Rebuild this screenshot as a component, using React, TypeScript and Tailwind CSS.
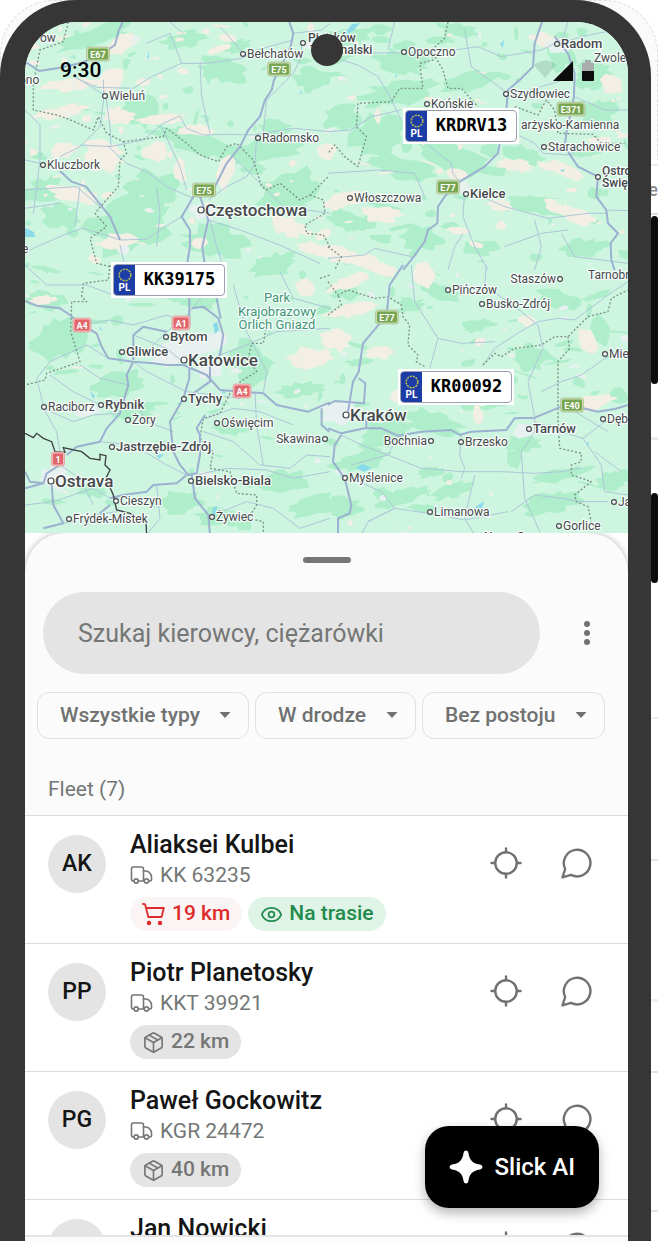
import { useState } from "react";
import { Eye, Package } from "lucide-react";

type Blob = [number, number, number, number];

type City = {
  name: string;
  x: number;
  y: number;
  size?: number;
  bold?: boolean;
  left?: boolean; // label on the left of the dot
};

type Driver = {
  name: string;
  initials: string;
  plate: string;
  distance: string;
  urgent?: boolean;
  onRoute?: boolean;
};

const drivers: Driver[] = [
  { name: "Aliaksei Kulbei", initials: "AK", plate: "KK 63235", distance: "19 km", urgent: true, onRoute: true },
  { name: "Piotr Planetosky", initials: "PP", plate: "KKT 39921", distance: "22 km" },
  { name: "Paweł Gockowitz", initials: "PG", plate: "KGR 24472", distance: "40 km" },
  { name: "Jan Nowicki", initials: "JN", plate: "KR 51820", distance: "52 km" },
];

const cities: City[] = [
  { name: "Wieluń", x: 105, y: 96 },
  { name: "Kluczbork", x: 43, y: 165 },
  { name: "Bełchatów", x: 243, y: 54 },
  { name: "Radomsko", x: 258, y: 138 },
  { name: "Częstochowa", x: 201, y: 210, size: 17, bold: true },
  { name: "Opoczno", x: 404, y: 52 },
  { name: "Końskie", x: 427, y: 104 },
  { name: "Szydłowiec", x: 506, y: 94 },
  { name: "Radom", x: 557, y: 44, size: 13, bold: true },
  { name: "Starachowice", x: 544, y: 147 },
  { name: "Włoszczowa", x: 350, y: 198 },
  { name: "Kielce", x: 466, y: 194, size: 13, bold: true },
  { name: "Bytom", x: 166, y: 337, size: 13, bold: true },
  { name: "Gliwice", x: 122, y: 352, size: 13, bold: true },
  { name: "Katowice", x: 184, y: 360, size: 17, bold: true },
  { name: "Tychy", x: 184, y: 399, size: 13, bold: true },
  { name: "Rybnik", x: 101, y: 405, size: 13, bold: true },
  { name: "Raciborz", x: 44, y: 407 },
  { name: "Żory", x: 128, y: 420 },
  { name: "Oświęcim", x: 217, y: 423 },
  { name: "Skawina", x: 325, y: 439, left: true },
  { name: "Jastrzębie-Zdrój", x: 112, y: 447, size: 13, bold: true },
  { name: "Bielsko-Biala", x: 191, y: 481, size: 13, bold: true },
  { name: "Ostrava", x: 51, y: 481, size: 17, bold: true },
  { name: "Cieszyn", x: 116, y: 501 },
  { name: "Frýdek-Místek", x: 69, y: 519 },
  { name: "Żywiec", x: 212, y: 517 },
  { name: "Pińczów", x: 448, y: 290 },
  { name: "Busko-Zdrój", x: 482, y: 304 },
  { name: "Staszów", x: 560, y: 279, left: true },
  { name: "Mie", x: 605, y: 354 },
  { name: "Kraków", x: 346, y: 415, size: 17, bold: true },
  { name: "Bochnia", x: 431, y: 441, left: true },
  { name: "Brzesko", x: 461, y: 442 },
  { name: "Tarnów", x: 529, y: 429, size: 13, bold: true },
  { name: "Dęb", x: 603, y: 419 },
  { name: "Myślenice", x: 345, y: 478 },
  { name: "Limanowa", x: 430, y: 512 },
  { name: "Ja", x: 614, y: 502 },
  { name: "Gorlice", x: 559, y: 526 },
];

const shields = [
  { code: "E67", x: 98, y: 54 },
  { code: "E75", x: 279, y: 69 },
  { code: "E75", x: 204, y: 190 },
  { code: "E77", x: 448, y: 187 },
  { code: "E371", x: 571, y: 109 },
  { code: "E77", x: 387, y: 317 },
  { code: "E40", x: 572, y: 405 },
  { code: "A4", x: 82, y: 325 },
  { code: "A1", x: 181, y: 323 },
  { code: "A4", x: 242, y: 391 },
  { code: "1", x: 58, y: 459 },
];

const forests: Blob[] = [
  [95, 36, 40, 9], [185, 40, 22, 8], [222, 70, 22, 12], [140, 112, 20, 15], [200, 143, 48, 10], [262, 152, 38, 12],
  [150, 192, 28, 20], [45, 190, 17, 12], [128, 226, 38, 26], [62, 216, 20, 12], [215, 240, 30, 14], [290, 192, 30, 20],
  [312, 80, 17, 12], [275, 128, 16, 8], [236, 46, 14, 6], [350, 36, 22, 10], [402, 62, 26, 11], [400, 92, 36, 12],
  [342, 118, 18, 13], [378, 136, 27, 20], [450, 156, 40, 15], [522, 155, 22, 9], [470, 82, 26, 9], [592, 74, 18, 14],
  [560, 52, 14, 18], [600, 112, 18, 12], [402, 168, 30, 11], [540, 206, 30, 9], [420, 238, 20, 13], [352, 222, 22, 9],
  [480, 248, 18, 8], [584, 248, 24, 9], [60, 338, 27, 22], [45, 300, 20, 9], [200, 300, 18, 9], [172, 290, 12, 11],
  [250, 362, 18, 20], [120, 384, 24, 12], [132, 411, 24, 8], [232, 428, 20, 8], [180, 502, 24, 11], [222, 518, 28, 9],
  [280, 482, 28, 11], [312, 506, 26, 9], [92, 490, 15, 7], [345, 292, 16, 8], [440, 292, 20, 8], [410, 305, 14, 6],
  [560, 300, 22, 8], [530, 358, 18, 12], [600, 330, 12, 15], [388, 432, 28, 13], [432, 422, 30, 11], [482, 402, 24, 8],
  [560, 475, 28, 6], [362, 460, 28, 9], [402, 497, 24, 9], [452, 490, 20, 7], [550, 503, 28, 10], [610, 482, 14, 9],
  [345, 508, 18, 11], [520, 444, 20, 8], [275, 265, 22, 11], [300, 390, 24, 7], [478, 325, 18, 6], [460, 30, 22, 6],
];

const fields: Blob[] = [
  [122, 44, 15, 9], [72, 85, 30, 6], [112, 80, 12, 14], [60, 112, 26, 6], [102, 154, 20, 15], [120, 116, 16, 8],
  [64, 150, 13, 7], [76, 195, 26, 7], [162, 120, 22, 5], [155, 152, 11, 10], [196, 130, 18, 6], [225, 172, 9, 16],
  [180, 172, 6, 12], [118, 242, 18, 8], [288, 226, 17, 10], [316, 250, 20, 7], [328, 150, 9, 9], [345, 200, 20, 7],
  [380, 214, 20, 8], [345, 256, 28, 8], [370, 264, 26, 7], [515, 165, 18, 6], [562, 170, 22, 6], [574, 215, 24, 7],
  [500, 205, 14, 6], [545, 40, 14, 7], [612, 84, 12, 9], [598, 141, 12, 5], [310, 358, 20, 10], [306, 288, 10, 12],
  [42, 300, 13, 4], [350, 282, 24, 6], [336, 340, 14, 10], [350, 310, 24, 6], [380, 352, 13, 7], [425, 276, 12, 13],
  [588, 340, 8, 14], [526, 320, 10, 6], [478, 415, 5, 12], [594, 402, 20, 7], [400, 394, 11, 7], [228, 38, 9, 4],
];

const towns: Blob[] = [
  [185, 350, 36, 13], [340, 412, 20, 11], [55, 478, 15, 12], [203, 211, 13, 8], [462, 188, 10, 6], [558, 46, 12, 8],
  [526, 431, 12, 7], [88, 410, 12, 6], [124, 250, 7, 5], [310, 45, 8, 5], [205, 478, 9, 7], [210, 372, 14, 6],
];

// one road set for each quarter of the map, drawn in that quarter's own 990x810 units
const tiles = [
  {
    place: "translate(0 0) scale(0.3333)",
    major:
      "M75 185L118 213L180 203L240 190L300 165L345 135L355 95L368 66M868 66L880 100L872 140L850 185L822 240L815 270L795 300L780 350L745 390L720 440L680 490L645 560L580 590L545 650L570 690L570 740L560 800M600 590L625 660L607 740L615 800M180 513L215 545L258 560L290 600L330 650L360 720",
    minor:
      "M880 100L965 90L990 70M230 235L290 262L400 265L455 230L545 190L620 190L725 175L770 150L880 120M225 230L320 290M310 240L312 290L300 380L240 440L180 470M318 290L330 380L333 440M240 435L330 440L430 420L490 370L540 348L560 385L610 405L680 403L760 405L880 385L990 395M320 435L380 490L440 515L500 560L580 595M75 330L120 375L120 480L110 560L100 640M75 480L130 492M75 625L180 610M75 760L100 745L180 710L245 685L300 700L360 720L440 718L480 690L545 650M360 735L375 800M770 410L765 490L740 530L680 560L625 600M905 130L905 170L880 220L800 300L790 400M600 185L605 290L630 400M625 660L720 690L800 720L850 740L960 790M630 660L650 740L670 800M485 380L540 500L560 570M440 130L510 100L545 190M510 66L550 100M660 80L740 170M75 570L230 560L300 620M240 560L225 680M470 560L480 640L470 740M700 470L770 540L850 620L990 640",
    dotted:
      "M205 66L190 125L120 150L100 250L100 330L170 345L200 355L280 390L295 350L320 400L370 425L380 460L360 480L355 560L310 610L285 640L320 680L270 715L290 790L330 800M370 425L490 410L500 385L560 430L600 465L655 485L680 440L710 430L760 480L785 560L800 570L840 550L900 600L930 585L985 530M930 585L970 600L975 640L915 675L920 700L970 705L990 740",
  },
  {
    place: "translate(328 0) scale(0.3333)",
    major:
      "M642 66L620 130L615 200L575 240L540 270L535 330L520 400L510 460L470 500L395 545L350 590L330 620L328 670L300 690L290 725L250 780L225 810M680 110L720 160L740 220L738 290L715 400L710 440L750 500L810 530L805 590L835 630L840 670L870 700L848 730L850 780L860 810",
    minor:
      "M40 160L220 158M40 180L90 195L150 230L180 280L220 360M380 150L450 140L520 170L640 150L680 130M410 90L430 200L540 280M0 395L70 390L130 350L220 330M300 435L370 490L375 520L395 545M410 575L405 650L440 740L480 810M440 580L530 620L660 655L780 640L835 640M560 400L620 430L645 460L725 465L780 430M0 520L150 510L260 520L290 590M0 775L110 765L140 745L250 770M405 700L380 740L360 810M830 630L900 632M720 66L700 130L760 110L860 90M740 290L830 330L900 330M545 290L640 260L740 230M200 66L180 150M620 660L640 740L620 810M700 700L740 770L900 790M530 740L640 700L720 690",
    dotted:
      "M360 66L350 115L310 150L315 180L275 190L285 265L215 265L190 305L90 310L85 380L115 410L90 500L50 470L20 435L0 460M310 150L345 210L360 265L400 265L450 320M560 320L630 345L655 300L680 330L690 400L795 403L820 430L890 430M0 740L40 770L20 810",
  },
  {
    place: "translate(0 265) scale(0.3333)",
    major:
      "M75 108L110 122L180 130L210 150L245 180L290 205L305 245L325 280L400 290L460 295L500 300L550 300L620 330L660 375L727 380L790 385L830 420L900 435L925 440L990 412M400 290L380 330L385 360L360 445L320 490L300 530L230 545L200 570M560 0L568 100L568 180M610 0L650 100L662 160M575 130L610 125L655 160L670 210L660 270L632 300M400 285L400 210L430 185L500 200M568 310L568 340L550 400L510 470L520 560L540 600L565 630L590 625L600 570L600 510L590 490L615 450M630 300L630 350L580 385M75 620L90 650L130 655L75 670M130 655L140 625L180 600M155 660L160 720L190 775L130 790M330 700L370 690L440 680L460 660L530 655L560 630M300 745L330 720M575 630L585 700L625 750L630 810M965 430L965 480L988 500",
    minor:
      "M75 0L140 60L260 60L340 90M245 180L330 165L400 180L500 150L568 180M130 420L110 340L150 290L260 240L325 280M130 430L170 500L180 560M300 420L220 380L150 330M385 360L300 340L240 300M400 290L440 320L500 350L560 380L640 390L720 400M440 260L500 200L560 150L620 80M400 210L500 250L560 300M660 270L740 240L830 200L990 190M700 60L740 200L800 320L790 385M620 460L700 430L780 440L880 480M610 500L700 530L780 600L870 610L920 570L990 575M590 630L680 610L800 615L880 640L990 620M300 530L400 540L500 600L560 630M75 720L160 710L280 670L330 700M180 600L240 640L280 720M190 775L280 750L350 740M640 750L740 710L820 730L900 790L990 760M840 20L880 100L990 130M400 400L440 470L520 500M360 445L280 450L220 470L130 430M765 380L770 480L790 600M470 660L480 760L440 810",
    dotted:
      "M330 0L325 45L250 55L245 95L260 110L215 110L212 200L240 290L140 325L135 345L75 360M800 180L790 235L755 235L745 280L770 320L720 350L725 370M690 385L660 445L610 460L600 520L640 560L630 610L690 620L710 685L770 690L770 720L745 760L790 770L790 810M960 40L990 30",
  },
  {
    place: "translate(328 265) scale(0.3333)",
    major:
      "M225 0L185 60L178 130L160 170L105 235L92 320L75 350L60 440M92 340L112 355L108 415L20 408L0 420M0 490L40 505L110 490L160 490L210 512L280 500L370 495L395 510L430 500L535 495L560 460L620 458L700 425L765 430L810 440L860 432L900 420M115 460L115 490M40 510L20 540L15 590L50 640L70 720L65 745L30 760L30 810",
    minor:
      "M465 300L500 250L560 210L630 170L690 160L740 165L840 90L900 50M475 0L470 60L580 140L630 180L645 250L600 350L620 455M250 0L260 110L330 220L400 235L500 230M330 220L300 330M400 510L395 570L410 610L400 640M210 512L180 570L100 540L40 510M70 600L180 570L280 610L400 620L520 620L620 625L700 620L760 610M440 630L410 760L440 810M120 770L200 730L300 745L410 765L540 740M620 458L620 500L580 560L590 700L640 810M765 520L820 600L830 680L900 690M765 520L830 470L900 455M765 520L700 500L620 470M70 640L160 680L200 730L120 770L100 810M800 560L880 620M640 380L700 350L760 330L860 260M725 430L840 500M550 740L620 690L700 700L760 710L840 710",
    dotted:
      "M0 50L30 90L60 75L140 100L180 95L220 120L225 155L245 180L240 240L270 270L265 290L290 305M0 150L40 120L30 90M465 300L500 265L520 275L560 250L640 240L680 215L720 215L780 155L840 140L850 100L900 75M720 215L725 250L690 290L690 420L690 460L695 550L760 565L760 590L730 600L730 630L790 650L740 690L745 710L780 725L790 770",
  },
];

const stateBorder =
  "M75 505L100 518L110 505L130 520L155 530L165 560L195 562L190 548L245 560L270 580L300 585L300 568L318 572L315 600L330 615L318 640L340 690L350 735L390 745L410 760L438 770L440 810";

const lakes =
  "M25 228l9 4l1 5l-10 0zM343 36l9-12l8-1l-7 8zM500 44l4-4l-1 8zM213 324l4-2l2 8l-4 4zM90 391l5 5l-2 3zM156 455l8-1l-5 5zM356 468l6-4l10 4l-8 4zM473 509l11-8l-2 7l-6 4zM213 508l4-2l-1 8l-4 1zM222 389l3 1l0 4l-3-1zM547 423l4 2l-3 0zM300 90l3 5l-3-2zM217 250l4 4l-1 3zM560 170l5-1l-2 3zM147 60l2-10l0 8zM395 76l3-2l-2 4zM586 443l3-1l-1 4zM176 150l6 2l-5-1zM99 326l4 5l-3-1z";

const random = (seed: number) => {
  let s = seed;
  return () => {
    s = (s * 16807) % 2147483647;
    return s / 2147483647;
  };
};

// ragged outline round an ellipse
const blobPath = ([cx, cy, rx, ry]: Blob, rnd: () => number) => {
  const steps = rx > 12 ? 22 : 9;
  const tilt = (rnd() - 0.5) * 0.7;
  let d = "";
  for (let i = 0; i < steps; i++) {
    const a = (i / steps) * Math.PI * 2;
    const r = 0.7 + rnd() * 0.6;
    const px = Math.cos(a) * rx * r;
    const py = Math.sin(a) * ry * r;
    const x = cx + px * Math.cos(tilt) - py * Math.sin(tilt);
    const y = cy + px * Math.sin(tilt) + py * Math.cos(tilt);
    d += `${i ? "L" : "M"}${x.toFixed(1)} ${y.toFixed(1)}`;
  }
  return d + "Z";
};

const scatter = (count: number, seed: number, maxY: number, max: number): Blob[] => {
  const rnd = random(seed);
  return Array.from({ length: count }, () => [
    25 + rnd() * 603,
    22 + rnd() * maxY,
    2 + rnd() * rnd() * max,
    1 + rnd() * rnd() * max * 0.6,
  ]);
};

const toPath = (blobs: Blob[], seed: number) => {
  const rnd = random(seed);
  return blobs.map((b) => blobPath(b, rnd)).join("");
};

const forestPath = toPath([...forests, ...scatter(190, 71, 511, 17)], 11);
const fieldPath = toPath([...fields, ...scatter(75, 913, 250, 12), ...scatter(15, 55, 511, 7)], 23);
const townPath = toPath([...towns, ...scatter(60, 407, 511, 5)], 37);

const Shield = ({ code, x, y }: { code: string; x: number; y: number }) => {
  const red = !code.startsWith("E");
  const w = code.length * 5 + 6;
  return (
    <g>
      <rect x={x - w / 2 - 1} y={y - 7} width={w + 2} height={14} rx={2.5} fill={red ? "#f4b8ba" : "#c9dcae"} stroke={red ? "#e58f92" : "#9fb58a"} strokeWidth={0.6} />
      <rect x={x - w / 2 + 0.5} y={y - 5.5} width={w - 1} height={11} rx={1.5} fill={red ? "#e0666b" : "#77a653"} />
      <text x={x} y={y + 3.5} fontSize={9} fontWeight={700} fill="#fff" textAnchor="middle">
        {code}
      </text>
    </g>
  );
};

const MapView = () => {
  return (
    <svg viewBox="25 22 603 511" preserveAspectRatio="xMidYMid slice" className="block h-full w-full" role="img" aria-label="Mapa">
      <rect x={-800} y={0} width={2400} height={560} fill="#cdf5e0" />
      <path d={forestPath} fill="#aeeecb" />
      <path d={fieldPath} fill="#f4efe4" />
      <path d={townPath} fill="#e9f1f0" />
      <path d={lakes} fill="#8adbea" />
      {tiles.map((t) => (
        <g key={t.place} transform={t.place} fill="none" strokeLinejoin="round">
          <path d={t.minor} stroke="#aec6d8" strokeWidth={3} />
          <path d={t.dotted} stroke="#7c9388" strokeWidth={4} strokeDasharray="6 6" />
          <path d={t.major} stroke="#9cb0d0" strokeWidth={6} />
        </g>
      ))}
      <path d={stateBorder} transform="translate(0 265) scale(0.3333)" fill="none" stroke="#3c4043" strokeWidth={4} />

      <g stroke="#ffffff" strokeOpacity={0.85} strokeWidth={2.5} paintOrder="stroke" strokeLinejoin="round" fill="#46494c" fontSize={12}>
        {cities.map((c) => (
          <text
            key={c.name}
            x={c.left ? c.x - 4 : c.x + 4}
            y={c.y + (c.size === 17 ? 6 : 4)}
            fontSize={c.size ?? 12}
            fontWeight={c.bold ? 500 : 400}
            textAnchor={c.left ? "end" : "start"}
          >
            {c.name}
          </text>
        ))}
        <text x={40} y={42}>ow</text>
        <text x={19} y={84}>ono</text>
        <text x={22} y={253}>e</text>
        <text x={521} y={129}>arżysko-Kamienna</text>
        <text x={594} y={62}>Zwole</text>
        <text x={588} y={279}>Tarnobr</text>
        <g fontSize={12} fontWeight={500}>
          <text x={308} y={42}>Piotrków</text>
          <text x={310} y={54}>Trybunalski</text>
          <text x={602} y={175}>Ostro</text>
          <text x={602} y={187}>Święt</text>
          <text x={484} y={541}>Nowy Sącz</text>
        </g>
        <g fill="#3f9677" textAnchor="middle" fontSize={13}>
          <text x={277} y={302}>Park</text>
          <text x={277} y={316}>Krajobrazowy</text>
          <text x={277} y={329}>Orlich Gniazd</text>
        </g>
      </g>
      <g fill="#fff" stroke="#46494c" strokeWidth={1.2}>
        {cities.map((c) => (
          <circle key={c.name} cx={c.x} cy={c.y} r={c.size === 17 ? 3 : 2.4} />
        ))}
        <circle cx={303} cy={43} r={2.4} />
        <circle cx={598} cy={177} r={2.4} />
      </g>
      {shields.map((s) => (
        <Shield key={`${s.x}-${s.y}`} {...s} />
      ))}
    </svg>
  );
};

const PlateMarker = ({ plate, className }: { plate: string; className: string }) => {
  return (
    <div className={`absolute bg-white p-0.5 ${className}`}>
      <div className="flex h-8 w-28 overflow-hidden rounded border border-gray-400 bg-white">
        <div className="flex w-[21px] flex-col items-center justify-center bg-[#1d3da6]">
          <svg viewBox="0 0 16 16" className="size-4" fill="none">
            <circle cx="8" cy="8" r="5.800" stroke="#aeb65a" strokeWidth="1.500" strokeDasharray="2.200 0.840" />
          </svg>
          <span className="text-[10px] leading-[10px] font-bold text-white">PL</span>
        </div>
        <span className="flex-1 text-center font-['DejaVu_Sans_Mono',monospace] text-[17px] leading-7 font-bold text-black">
          {plate}
        </span>
      </div>
    </div>
  );
};

const TruckIcon = () => (
  <svg viewBox="0 0 24 20" className="h-5 w-6" fill="none" stroke="currentColor" strokeWidth="1.600" strokeLinejoin="round" strokeLinecap="round">
    <path d="M4 16H3a1.500 1.500 0 0 1-1.500-1.500V3.500A1.500 1.500 0 0 1 3 2h8.500a2 2 0 0 1 2 2v12H8.500" />
    <path d="M13.500 6H16c3 0 5.500 3.500 5.500 6v2.500a1.500 1.500 0 0 1-1.500 1.500h-1" />
    <circle cx="6.200" cy="16" r="2.100" />
    <circle cx="16.500" cy="16" r="2.100" />
  </svg>
);

const CartIcon = () => (
  <svg viewBox="0 0 24 24" className="size-6" fill="none" stroke="currentColor" strokeWidth="1.800" strokeLinecap="round" strokeLinejoin="round">
    <path d="M1 2h1q1 0 1.300 1.200L6.300 15h12.400q1 0 1.200-1L21.800 6H4.200" />
    <circle cx="7" cy="21" r="1.300" fill="currentColor" />
    <circle cx="18" cy="21" r="1.300" fill="currentColor" />
  </svg>
);

const LocateIcon = () => (
  <svg viewBox="0 0 32 32" className="size-8" fill="none" stroke="currentColor" strokeWidth="2.400" strokeLinecap="round">
    <circle cx="16" cy="16" r="10.800" />
    <path d="M16 1.500v3.500M16 27v3.500M1.500 16h3.500M27 16h3.500" />
  </svg>
);

const ChatIcon = () => (
  <svg viewBox="0 0 32 32" className="size-8" fill="none" stroke="currentColor" strokeWidth="2.400" strokeLinejoin="round">
    <path d="M2.500 30.300L5.200 22A13.300 13.300 0 1 1 11 27.900z" />
  </svg>
);

const Filter = ({ label, value }: { label: string; value: string }) => {
  return (
    <label className="relative text-[#6f7271]">
      <span className="sr-only">{label}</span>
      <select className="h-[47px] appearance-none rounded-xl border border-[#dfe2e1] bg-transparent pr-12 pl-[22px] text-[21px] font-medium">
        <option>{value}</option>
      </select>
      <svg viewBox="0 0 12 6" className="pointer-events-none absolute top-5 right-[18px] h-1.5 w-3" fill="currentColor">
        <path d="M0.500 0h11L6 6z" />
      </svg>
    </label>
  );
};

const DriverRow = ({ driver }: { driver: Driver }) => {
  return (
    <li className="flex items-start gap-6 border-t border-[#dcdcdc] pt-[13px] pr-9 pb-3 pl-[23px]">
      <div className="mt-1.5 flex size-[58px] shrink-0 items-center justify-center rounded-full bg-[#e4e4e4] text-[23px] font-medium text-[#141515]">
        {driver.initials}
      </div>
      <div className="flex-1">
        <h3 className="text-[25px] leading-8 font-medium whitespace-nowrap text-[#141515]">{driver.name}</h3>
        <p className="flex items-center gap-1.5 text-[21px] leading-7 text-[#747776]">
          <TruckIcon />
          {driver.plate}
        </p>
        <div className="mt-2 flex gap-1.5">
          <span
            className={`flex h-[34px] items-center gap-1.5 rounded-full px-3 text-[21px] font-medium ${
              driver.urgent ? "bg-[#faf4f4] text-[#de2a2a]" : "bg-[#e4e4e4] text-[#747776]"
            }`}
          >
            {driver.urgent ? <CartIcon /> : <Package className="size-[23px]" strokeWidth={1.7} />}
            {driver.distance}
          </span>
          {driver.onRoute && (
            <span className="flex h-[34px] items-center gap-1.5 rounded-full bg-[#dff4e6] px-3 text-[21px] font-medium text-[#218a4c]">
              <Eye className="size-[23px]" strokeWidth={1.8} />
              Na trasie
            </span>
          )}
        </div>
      </div>
      <div className="mt-[18px] flex gap-[38px] text-[#6f7271]">
        <button type="button" aria-label="Lokalizuj">
          <LocateIcon />
        </button>
        <button type="button" aria-label="Wiadomość">
          <ChatIcon />
        </button>
      </div>
    </li>
  );
};

const App = () => {
  const [query, setQuery] = useState("");

  return (
    <div className="relative h-screen overflow-hidden bg-white font-[Roboto,sans-serif]">
      {/* Fondo claro detras de la esquina */}
      <div className="absolute inset-x-0 top-0 h-40 rounded-t-[54px] border border-b-0 border-dashed border-[#dddddd] bg-[#fafafa]" />

      <div className="relative flex h-full">
        <div className="flex min-w-0 flex-1 flex-col rounded-t-[76px] bg-[#363636] pt-[22px] pr-[23px] pl-[25px]">
          <div className="flex min-h-0 flex-1 flex-col overflow-hidden rounded-t-[52px] bg-white">
            {/* Mapa */}
            <div className="relative h-[511px] shrink-0 overflow-hidden">
              <MapView />
              <PlateMarker plate="KRDRV13" className="top-[86px] left-[378px]" />
              <PlateMarker plate="KK39175" className="top-[240px] left-[86px]" />
              <PlateMarker plate="KR00092" className="top-[347px] left-[373px]" />
              <div className="absolute inset-x-0 top-8 flex items-center justify-between pr-[34px] pl-[35px]">
                <span className="text-[21px] leading-8 font-medium text-black">9:30</span>
                <svg viewBox="0 0 60 24" className="h-6 w-[60px]" aria-hidden="true">
                  <path d="M0 7Q11 -2 22 7L11 20z" fill="#1d4f3a" opacity="0.15" />
                  <path d="M19 23L39 3V23z" fill="#0c0c0c" />
                  <path d="M48 5h3V2h6v3h3v9H48z" fill="#a9adac" />
                  <path d="M48 13h12v9q0 1-1 1H49q-1 0-1-1z" fill="#0c0c0c" />
                </svg>
              </div>
              <div className="absolute top-3 left-1/2 size-8 -translate-x-1/2 rounded-full bg-[#363636]" />
            </div>

            {/* Panel inferior */}
            <div className="flex min-h-0 flex-1 flex-col rounded-t-[40px] bg-[#fbfbfb] shadow-[0_0_6px_rgba(0,0,0,0.3)]">
              <div className="mt-6 h-1.5 w-12 shrink-0 self-center rounded-full bg-[#747776]" />

              <div className="mt-[29px] flex items-center gap-[23px] pr-[17px] pl-[18px]">
                <input
                  type="text"
                  aria-label="Szukaj"
                  placeholder="Szukaj kierowcy, ciężarówki"
                  value={query}
                  onChange={(e) => setQuery(e.target.value)}
                  className="h-[82px] min-w-0 flex-1 rounded-full bg-[#e4e4e4] px-[35px] text-[25px] text-[#141515] placeholder:text-[#747776] focus:outline-none"
                />
                <button type="button" aria-label="Más" className="flex size-12 items-center justify-center text-[#6f7271]">
                  <svg viewBox="0 0 6 24" className="h-6 w-1.5" fill="currentColor">
                    <circle cx="3" cy="3" r="3" />
                    <circle cx="3" cy="12" r="3" />
                    <circle cx="3" cy="21" r="3" />
                  </svg>
                </button>
              </div>

              <div className="mt-[18px] flex gap-1.5 pl-3">
                <Filter label="Typ" value="Wszystkie typy" />
                <Filter label="Status" value="W drodze" />
                <Filter label="Postój" value="Bez postoju" />
              </div>

              <h2 className="pt-9 pb-3 pl-[23px] text-[21px] leading-7 text-[#747776]">Fleet (7)</h2>

              <div className="relative min-h-0 flex-1">
                <ul className="h-full overflow-hidden bg-white">
                  {drivers.map((d) => (
                    <DriverRow key={d.plate} driver={d} />
                  ))}
                </ul>
                <button
                  type="button"
                  className="absolute right-[29px] bottom-[27px] flex h-[82px] items-center gap-3 rounded-3xl bg-black px-6 text-2xl font-medium text-white shadow-[0_5px_12px_rgba(0,0,0,0.3)]"
                >
                  <svg viewBox="0 0 34 34" className="size-[34px]" fill="currentColor">
                    <path d="M17 0.500q2 0 2.400 2.300C20.500 10 23 13.300 31 14.600Q33.500 15.200 33.500 17T31 19.400C23 20.700 20.500 24 19.400 31.200Q19 33.500 17 33.500T14.600 31.200C13.500 24 11 20.700 3 19.400Q0.500 18.800 0.500 17T3 14.600C11 13.300 13.500 10 14.600 2.800Q15 0.500 17 0.500z" />
                  </svg>
                  Slick AI
                </button>
              </div>
              <div className="h-1.5 shrink-0 border-t-2 border-[#e4e4e4]" />
            </div>
          </div>
        </div>

        {/* Lateral con botones */}
        <div className="flex w-[7px] shrink-0 flex-col overflow-hidden">
          <div className="h-[166px] border-b-2 border-[#eeeeee]" />
          <div className="flex h-[49px] items-center justify-end overflow-hidden border-b-2 border-[#dddddd] text-lg font-medium text-[#8a8a8a]">e</div>
          <div className="mt-px h-[168px] shrink-0 rounded-full bg-[#0c0c0c]" />
          <div className="mt-[53px] mb-[53px] h-[3px] shrink-0 bg-[#eaeaea]" />
          <div className="h-[90px] shrink-0 rounded-full bg-[#0c0c0c]" />
          <div className="mt-[134px] h-0.5 shrink-0 bg-[#eeeeee]" />
          <div className="mt-[140px] h-0.5 shrink-0 bg-[#e4e4e4]" />
          <div className="mt-[138px] h-[3px] shrink-0 bg-[#f0f0f0]" />
          <div className="mt-[69px] h-0.5 shrink-0 bg-[#e4e4e4]" />
          <div className="mt-[137px] h-0.5 shrink-0 bg-[#e4e4e4]" />
        </div>
      </div>
    </div>
  );
};

export default App;
